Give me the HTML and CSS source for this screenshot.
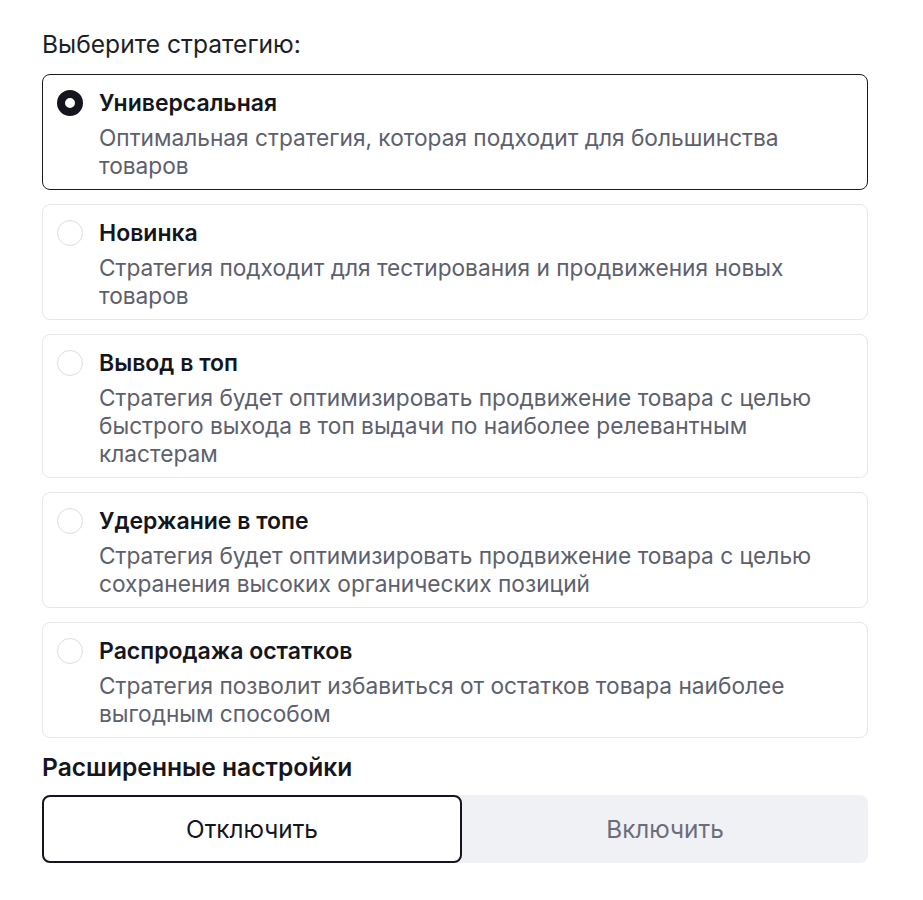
FILE: index.html
```html
<!DOCTYPE html>
<html lang="ru">
<head>
<meta charset="utf-8">
<link rel="stylesheet" href="styles.css">
</head>
<body>
<div class="page">
  <div class="label">Выберите стратегию:</div>
  <div class="options">
    <div class="card selected">
      <span class="radio on"></span>
      <div class="body">
        <div class="title">Универсальная</div>
        <div class="desc">Оптимальная стратегия, которая подходит для большинства товаров</div>
      </div>
    </div>
    <div class="card">
      <span class="radio"></span>
      <div class="body">
        <div class="title">Новинка</div>
        <div class="desc">Стратегия подходит для тестирования и продвижения новых товаров</div>
      </div>
    </div>
    <div class="card">
      <span class="radio"></span>
      <div class="body">
        <div class="title">Вывод в топ</div>
        <div class="desc">Стратегия будет оптимизировать продвижение товара с целью быстрого выхода в топ выдачи по наиболее релевантным кластерам</div>
      </div>
    </div>
    <div class="card">
      <span class="radio"></span>
      <div class="body">
        <div class="title">Удержание в топе</div>
        <div class="desc">Стратегия будет оптимизировать продвижение товара с целью сохранения высоких органических позиций</div>
      </div>
    </div>
    <div class="card">
      <span class="radio"></span>
      <div class="body">
        <div class="title">Распродажа остатков</div>
        <div class="desc">Стратегия позволит избавиться от остатков товара наиболее выгодным способом</div>
      </div>
    </div>
  </div>
  <div class="section">Расширенные настройки</div>
  <div class="segmented">
    <button class="seg active">Отключить</button>
    <button class="seg">Включить</button>
  </div>
</div>
</body>
</html>
```
FILE: styles.css
```css
* { box-sizing: border-box; }
html, body { margin: 0; padding: 0; background: #fff; }
body {
  font-family: Inter, "Noto Sans", sans-serif;
  color: #15161d;
}
.page {
  width: 826px;
  margin-left: 42px;
  padding-top: 29px;
}
.label {
  font-size: 24.6px;
  line-height: 30px;
  color: #1d1f26;
}
.options {
  margin-top: 15px;
  display: flex;
  flex-direction: column;
  gap: 14px;
}
.card {
  display: flex;
  gap: 16px;
  align-items: flex-start;
  border: 1px solid #e6e7eb;
  border-radius: 8px;
  padding: 14px 15px 9px 14px;
}
.card.selected { border-color: #1a1c24; }
.radio {
  flex: none;
  width: 26px;
  height: 26px;
  border-radius: 50%;
  border: 1px solid #dcdee3;
  margin-top: 1px;
}
.radio.on {
  border: 8px solid #15161d;
  background: #fff;
}
.body { flex: 1; }
.title {
  font-size: 23px;
  line-height: 28px;
  font-weight: 600;
  color: #15161d;
}
.desc {
  margin-top: 7px;
  font-size: 22.7px;
  line-height: 28px;
  color: #5d606d;
}
.section {
  margin-top: 14px;
  font-size: 24.6px;
  line-height: 30px;
  font-weight: 600;
  color: #15161d;
}
.segmented {
  margin-top: 13px;
  display: grid;
  grid-template-columns: 420px 1fr;
  background: #f0f1f4;
  border-radius: 8px;
  height: 68px;
}
.seg {
  font-family: inherit;
  font-size: 24.3px;
  border: none;
  background: transparent;
  color: #6b6e7a;
  border-radius: 8px;
}
.seg.active {
  background: #fff;
  border: 2px solid #15161d;
  color: #15161d;
}
```
